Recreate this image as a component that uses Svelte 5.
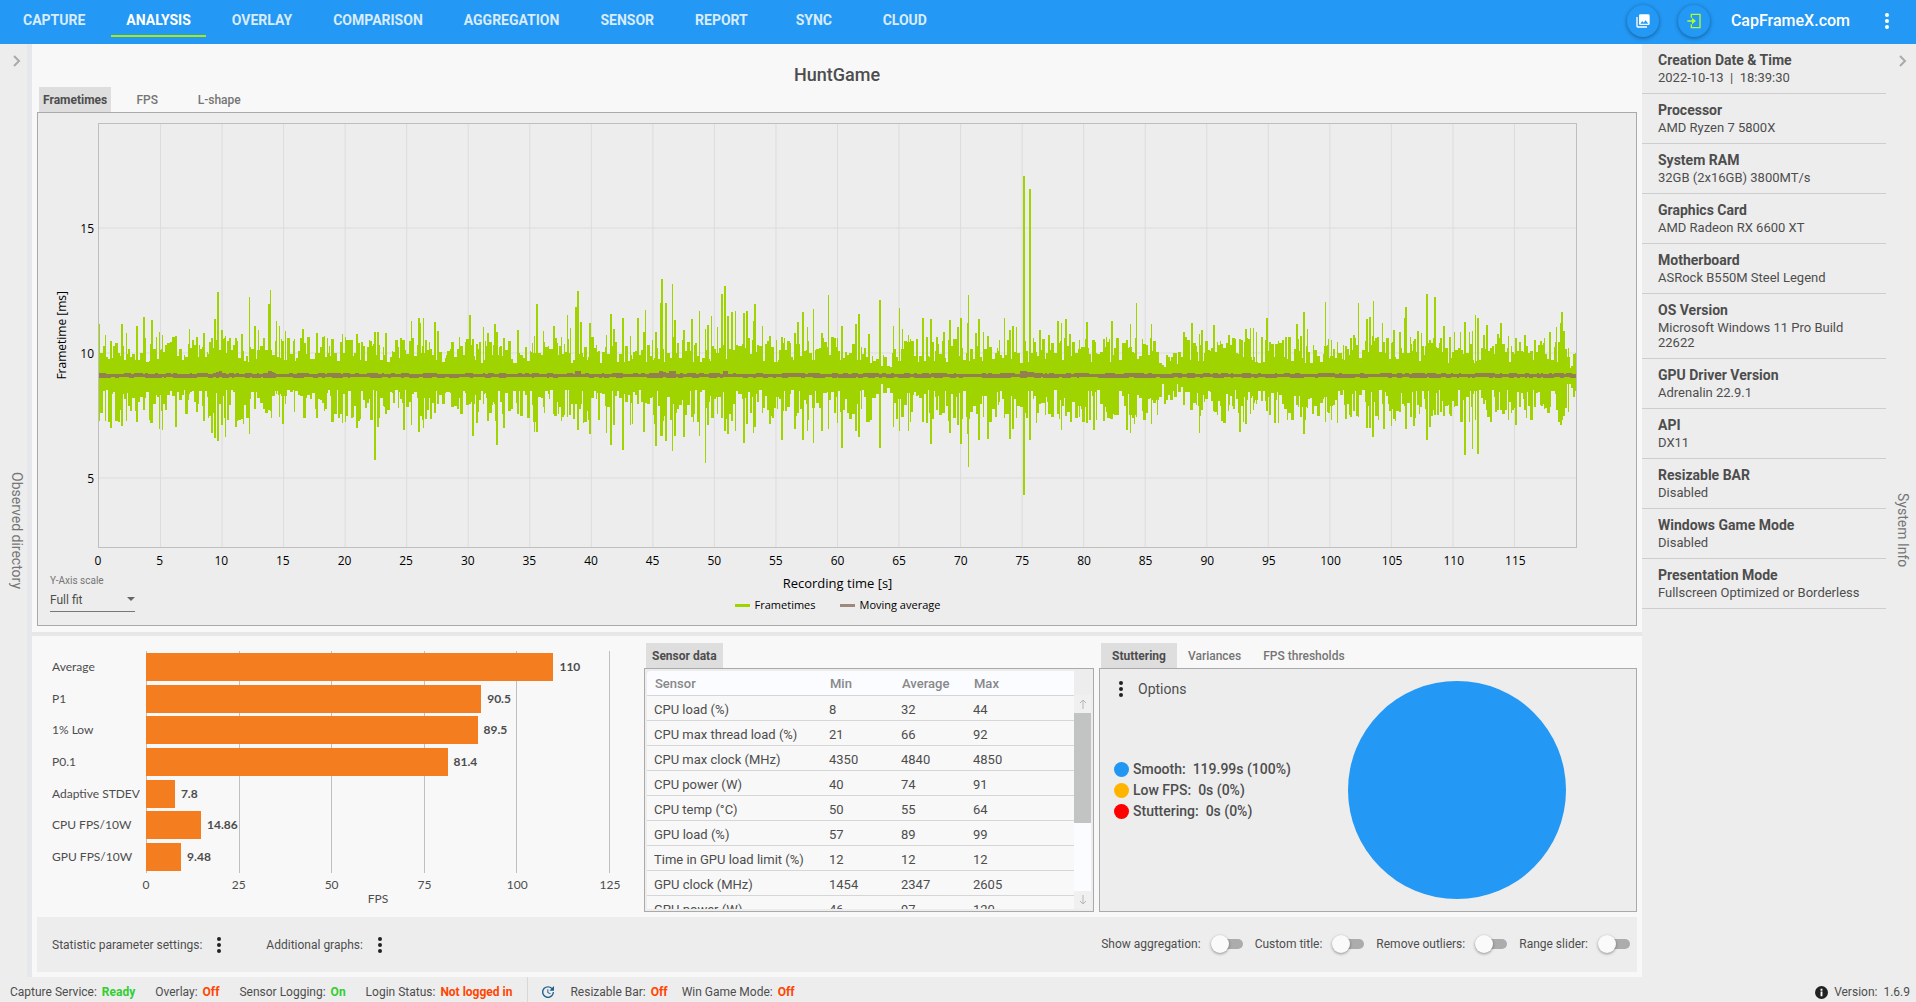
<script lang="ts">
  const nav = ["CAPTURE", "ANALYSIS", "OVERLAY", "COMPARISON", "AGGREGATION", "SENSOR", "REPORT", "SYNC", "CLOUD"];
  let page = $state("ANALYSIS");

  const chartTabs = ["Frametimes", "FPS", "L-shape"];
  let chartTab = $state("Frametimes");

  const stutterTabs = ["Stuttering", "Variances", "FPS thresholds"];
  let stutterTab = $state("Stuttering");

  const info = [
    ["Creation Date & Time", "2022-10-13  |  18:39:30"],
    ["Processor", "AMD Ryzen 7 5800X"],
    ["System RAM", "32GB (2x16GB) 3800MT/s"],
    ["Graphics Card", "AMD Radeon RX 6600 XT"],
    ["Motherboard", "ASRock B550M Steel Legend"],
    ["OS Version", "Microsoft Windows 11 Pro Build 22622"],
    ["GPU Driver Version", "Adrenalin 22.9.1"],
    ["API", "DX11"],
    ["Resizable BAR", "Disabled"],
    ["Windows Game Mode", "Disabled"],
    ["Presentation Mode", "Fullscreen Optimized or Borderless"],
  ];

  const stats = [
    { name: "Average", value: 110 },
    { name: "P1", value: 90.5 },
    { name: "1% Low", value: 89.5 },
    { name: "P0.1", value: 81.4 },
    { name: "Adaptive STDEV", value: 7.8 },
    { name: "CPU FPS/10W", value: 14.86 },
    { name: "GPU FPS/10W", value: 9.48 },
  ];
  const fpsMax = 125;
  const fpsTicks = [0, 25, 50, 75, 100, 125];

  const sensors = [
    ["CPU load (%)", 8, 32, 44],
    ["CPU max thread load (%)", 21, 66, 92],
    ["CPU max clock (MHz)", 4350, 4840, 4850],
    ["CPU power (W)", 40, 74, 91],
    ["CPU temp (°C)", 50, 55, 64],
    ["GPU load (%)", 57, 89, 99],
    ["Time in GPU load limit (%)", 12, 12, 12],
    ["GPU clock (MHz)", 1454, 2347, 2605],
    ["GPU power (W)", 46, 97, 120],
  ];

  const stutter = [
    { name: "Smooth", text: "119.99s (100%)", color: "#2196f3" },
    { name: "Low FPS", text: "0s (0%)", color: "#ffb400" },
    { name: "Stuttering", text: "0s (0%)", color: "#ff0000" },
  ];

  const toggles = $state([
    { name: "Show aggregation", on: false },
    { name: "Custom title", on: false },
    { name: "Remove outliers", on: false },
    { name: "Range slider", on: false },
  ]);

  // frametime plot, 120 s wide, drawn in a 1478 x 423 box
  const W = 1478;
  const H = 423;
  const xTicks = Array.from({ length: 24 }, (_, i) => i * 5);
  const yTicks = [15, 10, 5];
  const yOf = (ms: number) => 104 + (15 - ms) * 25;

  // [x, top, bottom] of the frames that stand out
  const peaks = [
    [0, 200, 289], [6, 211, 297], [11, 217, 304], [22, 200, 302], [27, 209, 297], [37, 202, 298], [44, 193, 286], [52, 196, 298],
    [60, 208, 305], [63, 211, 306], [76, 212, 303], [90, 205, 270], [97, 213, 288], [104, 209, 297], [112, 214, 309], [115, 195, 314],
    [118, 168, 317], [122, 206, 301], [126, 212, 313], [136, 214, 303], [142, 210, 295], [150, 173, 310], [155, 202, 285], [159, 206, 270],
    [169, 180, 286], [171, 166, 287], [177, 197, 270], [180, 202, 293], [186, 207, 280], [203, 205, 270], [217, 209, 294], [225, 212, 287],
    [243, 210, 299], [246, 213, 298], [257, 210, 304], [271, 217, 283], [275, 208, 336], [278, 208, 303], [286, 209, 290], [304, 216, 306],
    [312, 197, 301], [319, 194, 308], [321, 199, 280], [324, 194, 304], [335, 198, 289], [338, 207, 280], [370, 191, 280], [373, 215, 312],
    [384, 203, 280], [388, 209, 297], [395, 200, 280], [397, 208, 321], [404, 214, 304], [418, 206, 290], [435, 212, 308], [437, 180, 308],
    [444, 207, 283], [454, 202, 290], [462, 213, 297], [468, 191, 293], [471, 204, 280], [476, 183, 280], [478, 167, 306], [481, 198, 280],
    [490, 199, 310], [507, 211, 309], [511, 190, 321], [514, 205, 301], [523, 194, 326], [531, 212, 301], [538, 194, 280], [544, 208, 308],
    [546, 186, 270], [556, 208, 322], [561, 179, 312], [562, 155, 312], [566, 179, 317], [573, 160, 327], [575, 196, 312], [584, 206, 313],
    [592, 195, 293], [600, 187, 312], [606, 205, 339], [608, 201, 301], [612, 192, 294], [618, 203, 290], [622, 170, 294], [625, 162, 307],
    [628, 192, 310], [632, 188, 297], [636, 187, 307], [644, 189, 319], [647, 187, 300], [654, 197, 309], [655, 180, 303], [663, 202, 289],
    [670, 212, 300], [682, 213, 316], [695, 209, 305], [698, 198, 289], [703, 188, 316], [708, 203, 307], [714, 185, 319], [722, 209, 307],
    [729, 171, 305], [738, 214, 299], [743, 202, 324], [757, 200, 307], [760, 190, 313], [770, 210, 298], [781, 176, 324], [795, 202, 303],
    [801, 184, 307], [804, 205, 280], [810, 211, 307], [824, 194, 298], [832, 195, 320], [838, 213, 286], [845, 208, 288], [851, 196, 309],
    [859, 203, 301], [862, 194, 320], [869, 199, 310], [870, 171, 343], [877, 209, 270], [880, 195, 316], [885, 208, 293], [889, 212, 315],
    [906, 194, 294], [911, 206, 315], [914, 202, 305], [918, 203, 294], [925, 52, 371], [931, 65, 316], [941, 206, 280], [950, 211, 285],
    [959, 197, 290], [963, 199, 306], [967, 195, 292], [971, 210, 280], [981, 216, 293], [988, 198, 299], [995, 224, 306], [1008, 213, 288],
    [1011, 215, 288], [1013, 197, 280], [1028, 216, 306], [1032, 200, 309], [1038, 179, 293], [1044, 215, 284], [1048, 221, 289],
    [1053, 200, 300], [1059, 228, 291], [1085, 208, 281], [1093, 199, 283], [1098, 222, 281], [1101, 210, 309], [1103, 206, 286],
    [1115, 201, 287], [1119, 218, 291], [1122, 217, 282], [1130, 211, 281], [1135, 216, 285], [1141, 215, 308], [1147, 205, 300],
    [1152, 204, 290], [1155, 204, 286], [1158, 208, 280], [1163, 219, 277], [1168, 194, 287], [1171, 218, 291], [1177, 220, 276],
    [1184, 216, 280], [1187, 213, 279], [1198, 200, 281], [1202, 212, 293], [1205, 188, 310], [1206, 202, 306], [1209, 205, 284],
    [1215, 221, 289], [1227, 178, 298], [1230, 215, 280], [1233, 216, 296], [1239, 218, 299], [1247, 222, 295], [1252, 214, 282],
    [1255, 211, 287], [1260, 179, 293], [1268, 195, 304], [1271, 193, 304], [1274, 212, 313], [1275, 177, 304], [1277, 214, 292],
    [1279, 213, 285], [1284, 199, 280], [1285, 218, 305], [1290, 215, 280], [1293, 219, 302], [1295, 206, 295], [1301, 208, 288],
    [1306, 194, 282], [1307, 183, 305], [1312, 220, 293], [1315, 217, 302], [1319, 207, 281], [1323, 209, 275], [1328, 170, 316],
    [1331, 216, 303], [1336, 173, 283], [1345, 202, 292], [1351, 213, 290], [1356, 208, 283], [1362, 208, 276], [1366, 198, 331],
    [1371, 208, 298], [1374, 207, 325], [1377, 191, 296], [1379, 194, 330], [1385, 211, 280], [1388, 201, 286], [1397, 220, 288],
    [1399, 210, 286], [1402, 199, 279], [1410, 212, 296], [1413, 222, 289], [1417, 214, 301], [1421, 218, 283], [1426, 211, 286],
    [1428, 227, 294], [1436, 216, 283], [1442, 217, 281], [1446, 214, 285], [1451, 208, 283], [1458, 203, 281], [1462, 199, 301],
    [1463, 188, 296], [1465, 207, 292], [1470, 224, 288], [1475, 230, 273],
  ];

  // small generator with a fixed seed, so the trace is the same on every render
  let seed = 1337;
  const rnd = () => {
    seed = (seed * 1103515245 + 12345) % 2147483648;
    return seed / 2147483648;
  };

  function buildTrace() {
    const top: number[] = [];
    const bottom: number[] = [];
    for (let x = 0; x < W; ) {
      const w = 1 + Math.floor(rnd() * 3);
      const calm = (x > 772 && x < 796) || (x > 1059 && x < 1084) || x > 1466 ? 0.6 : 1;
      const t = 251 - Math.round((12 + rnd() * 26) * calm);
      const b = 251 + Math.round((15 + rnd() ** 1.5 * 34) * calm);
      for (let i = 0; i < w && x < W; i++, x++) {
        top[x] = t;
        bottom[x] = b;
      }
    }
    for (const [x, t, b] of peaks) {
      const w = t < 70 || x % 3 ? 2 : 1;
      for (let i = x; i < x + w && i < W; i++) {
        top[i] = Math.min(top[i], t);
        bottom[i] = Math.max(bottom[i], b);
      }
    }
    return top.map((t, x) => `M${x} ${t}h1V${bottom[x]}h-1z`).join("");
  }

  function buildAverage() {
    let d = "";
    for (let x = 0; x < W; ) {
      const w = 2 + Math.floor(rnd() * 4);
      const y = 249 + Math.floor(rnd() * 2);
      const spike = peaks.some(([px, t]) => t < 170 && Math.abs(px - x) < 4) ? 2 : 0;
      d += `M${x} ${y - spike}h${w}V${253 + Math.floor(rnd() * 2)}h-${w}z`;
      x += w;
    }
    return d;
  }

  const trace = buildTrace();
  const average = buildAverage();
</script>

{#snippet dots()}
  <svg class="dots" viewBox="0 0 4 16" aria-hidden="true">
    <circle cx="2" cy="2" r="2" /><circle cx="2" cy="8" r="2" /><circle cx="2" cy="14" r="2" />
  </svg>
{/snippet}

{#snippet chevron()}
  <svg class="chevron" viewBox="0 0 8 12" aria-hidden="true"><path d="M1 1l5 5-5 5" /></svg>
{/snippet}

<div class="app">
  <header>
    <nav>
      {#each nav as item (item)}
        <button class="nav-item" class:active={page === item} onclick={() => (page = item)}>{item}</button>
      {/each}
    </nav>
    <div class="head-right">
      <button class="round" aria-label="Screenshot">
        <svg viewBox="0 0 24 24"><path fill="#fff" d="M22 16V4a2 2 0 0 0-2-2H8a2 2 0 0 0-2 2v12a2 2 0 0 0 2 2h12a2 2 0 0 0 2-2m-11-4l2.030 2.710L16 11l4 5H8M2 6v14a2 2 0 0 0 2 2h14v-2H4V6" /></svg>
      </button>
      <button class="round" aria-label="Login">
        <svg viewBox="0 0 24 24" fill="none" stroke="#adff2f" stroke-width="2">
          <path d="M8 7V2h13v20H8v-5M2 12h10" />
          <path fill="#adff2f" stroke="none" d="M9 7l6 5-6 5z" />
        </svg>
      </button>
      <a class="brand" href="#home">CapFrameX.com</a>
      <button class="more" aria-label="More">{@render dots()}</button>
    </div>
  </header>

  <div class="body">
    <aside class="strip left">
      <button aria-label="Expand directory">{@render chevron()}</button>
      <span>Observed directory</span>
    </aside>

    <main>
      <section class="top">
        <h1>HuntGame</h1>
        <div class="tabs wide">
          {#each chartTabs as tab (tab)}
            <button class="tab" class:active={chartTab === tab} onclick={() => (chartTab = tab)}>{tab}</button>
          {/each}
        </div>
        <div class="panel chart">
          <div class="plot-row">
            <div class="y-title"><span>Frametime [ms]</span></div>
            <div class="y-ticks">
              {#each yTicks as t (t)}<span>{t}</span>{/each}
            </div>
            <svg class="plot" viewBox="0 0 {W} {H}" preserveAspectRatio="none" shape-rendering="crispEdges">
              <g stroke="#dcdcdc">
                {#each xTicks.slice(1) as t (t)}
                  <line x1={(t / 120) * W} x2={(t / 120) * W} y1="0" y2={H} />
                {/each}
                {#each yTicks as t (t)}
                  <line x1="0" x2={W} y1={yOf(t)} y2={yOf(t)} />
                {/each}
              </g>
              <path d={trace} fill="#9fd400" />
              <path d={average} fill="#92814d" />
            </svg>
          </div>
          <div class="x-axis">
            <div class="x-ticks">
              {#each xTicks as t (t)}<span>{t}</span>{/each}
            </div>
          </div>
          <div class="under">
            <div class="scale">
              <label for="yscale">Y-Axis scale</label>
              <div class="select">
                <select id="yscale">
                  <option>Full fit</option>
                  <option>IQR</option>
                </select>
                <i></i>
              </div>
            </div>
            <div class="captions">
              <div class="x-title">Recording time [s]</div>
              <div class="legend">
                <span><i class="green"></i>Frametimes</span>
                <span><i class="brown"></i>Moving average</span>
              </div>
            </div>
          </div>
        </div>
      </section>

      <div class="splitter"></div>

      <section class="bottom">
        <div class="bars">
          <div class="bar-names">
            {#each stats as s (s.name)}<span>{s.name}</span>{/each}
          </div>
          <div class="bar-area">
            <div class="bar-plot">
              {#each stats as s (s.name)}
                <div class="bar-row">
                  <div class="bar" style="width:{(s.value / fpsMax) * 100}%"></div>
                  <b>{s.value}</b>
                </div>
              {/each}
            </div>
            <div class="bar-ticks">
              {#each fpsTicks as t (t)}<span>{t}</span>{/each}
            </div>
            <div class="bar-unit">FPS</div>
          </div>
        </div>

        <div class="sensor">
          <div class="tabs snug"><button class="tab active">Sensor data</button></div>
          <div class="panel sheet">
            <div class="table-wrap">
              <table>
                <thead>
                  <tr><th>Sensor</th><th>Min</th><th>Average</th><th>Max</th></tr>
                </thead>
                <tbody>
                  {#each sensors as row (row[0])}
                    <tr>{#each row as cell}<td>{cell}</td>{/each}</tr>
                  {/each}
                </tbody>
              </table>
            </div>
            <div class="scrollbar">
              <svg viewBox="0 0 8 10"><path d="M4 10V1M1 4l3-3 3 3" /></svg>
              <div class="track"><div class="thumb"></div></div>
              <svg viewBox="0 0 8 10"><path d="M4 0v9M1 6l3 3 3-3" /></svg>
            </div>
          </div>
        </div>

        <div class="stutter">
          <div class="tabs">
            {#each stutterTabs as tab (tab)}
              <button class="tab" class:active={stutterTab === tab} onclick={() => (stutterTab = tab)}>{tab}</button>
            {/each}
          </div>
          <div class="panel pie-panel">
            <div class="pie-left">
              <button class="options">{@render dots()}Options</button>
              <ul>
                {#each stutter as s (s.name)}
                  <li><i style="background:{s.color}"></i>{s.name + ":  " + s.text}</li>
                {/each}
              </ul>
            </div>
            <div class="pie"></div>
          </div>
        </div>
      </section>

      <footer>
        <button class="setting">Statistic parameter settings: {@render dots()}</button>
        <button class="setting">Additional graphs: {@render dots()}</button>
        <div class="toggles">
          {#each toggles as t (t.name)}
            <label>{t.name}: <input type="checkbox" role="switch" bind:checked={t.on} /></label>
          {/each}
        </div>
      </footer>
    </main>

    <aside class="info">
      <dl>
        {#each info as [k, v] (k)}
          <div><dt>{k}</dt><dd>{v}</dd></div>
        {/each}
      </dl>
      <div class="strip right">
        <button aria-label="Collapse info">{@render chevron()}</button>
        <span>System Info</span>
      </div>
    </aside>
  </div>

  <div class="status">
    <div class="group">
      <span>Capture Service: <b class="ok">Ready</b></span>
      <span>Overlay: <b class="bad">Off</b></span>
      <span>Sensor Logging: <b class="ok">On</b></span>
      <span>Login Status: <b class="bad">Not logged in</b></span>
    </div>
    <div class="group second">
      <svg class="sync" viewBox="0 0 24 24" aria-hidden="true">
        <path fill="#1f618d" d="M21 10.120h-6.780l2.740-2.820c-2.730-2.700-7.150-2.800-9.880-.1a6.875 6.875 0 0 0 0 9.790 7.020 7.020 0 0 0 9.880 0C18.320 15.650 19 14.080 19 12.100h2c0 1.980-.88 4.550-2.640 6.290-3.510 3.480-9.210 3.480-12.720 0-3.500-3.470-3.530-9.110-.02-12.580a8.987 8.987 0 0 1 12.650 0L21 3v7.120M12.500 8v4.250l3.500 2.080-.72 1.210L11 13V8h1.500z" />
      </svg>
      <span>Resizable Bar: <b class="bad">Off</b></span>
      <span>Win Game Mode: <b class="bad">Off</b></span>
    </div>
    <div class="version">
      <svg viewBox="0 0 14 14" aria-hidden="true"><circle cx="7" cy="7" r="7" fill="#222" /><path d="M6 6h2v5H6zM6 3h2v2H6z" fill="#fff" /></svg>
      <span>Version:</span><span>1.6.9</span>
    </div>
  </div>
</div>

<style>
  :global(body) {
    background: #ededed;
    color: #4d4d4d;
    font: 13px/16px Roboto, "Liberation Sans", sans-serif;
  }
  button {
    padding: 0;
    border: none;
    background: none;
    color: inherit;
    font: inherit;
    cursor: pointer;
  }
  .app {
    display: flex;
    flex-direction: column;
    min-height: 100vh;
  }
  .dots {
    width: 4px;
    height: 16px;
    fill: #222;
    flex: none;
  }
  .chevron {
    width: 8px;
    height: 12px;
    fill: none;
    stroke: #aaa;
    stroke-width: 2;
  }

  header {
    display: flex;
    justify-content: space-between;
    height: 44px;
    background: #2398f4;
    color: #fff;
  }
  nav {
    display: flex;
    gap: 11px;
    padding-left: 8px;
  }
  .nav-item {
    min-width: 80px;
    height: 37px;
    padding: 5px 15px 0;
    border-bottom: 2px solid transparent;
    color: #d8ecfd;
    font-size: 14px;
    font-weight: 700;
  }
  .nav-item.active {
    border-color: #aeea00;
    color: #fff;
  }
  .head-right {
    display: flex;
    align-items: center;
    height: 42px;
    padding-right: 27px;
  }
  .round {
    display: grid;
    place-items: center;
    width: 32px;
    height: 32px;
    margin-right: 19px;
    border-radius: 50%;
    box-shadow: 0 1px 4px rgba(0, 0, 0, 0.4);
  }
  .round svg {
    width: 16px;
    height: 16px;
  }
  .brand {
    margin-left: 2px;
    color: #fff;
    font-size: 16px;
    font-weight: 500;
    text-decoration: none;
  }
  .more {
    display: flex;
    margin-left: 35px;
  }
  .more .dots {
    fill: #fff;
  }

  .body {
    display: flex;
    flex: 1;
  }
  .strip {
    display: flex;
    flex-direction: column;
    align-items: center;
    flex: none;
    box-sizing: border-box;
    color: #757575;
    font-size: 14px;
  }
  .strip button {
    height: 40px;
    padding-bottom: 4px;
  }
  .strip span {
    flex: 1;
    writing-mode: vertical-rl;
    text-align: center;
  }
  .left {
    width: 32px;
    padding-left: 2px;
    box-shadow: inset -5px 0 #e6e7ea;
  }
  .right {
    width: 30px;
    padding-left: 4px;
  }

  main {
    flex: 1;
    min-width: 0;
    background: #f8f8f8;
    display: flex;
    flex-direction: column;
  }
  h1 {
    margin: 0;
    padding: 21px 0 2px;
    font-size: 18px;
    line-height: 20px;
    font-weight: 500;
    text-align: center;
  }
  .top {
    padding: 0 5px 6px;
  }
  .tabs {
    display: flex;
    height: 25px;
    padding-left: 2px;
  }
  .tab {
    padding: 0 11px;
    color: #757575;
    font-size: 12px;
    font-weight: 500;
  }
  .tab.active {
    background: #dedede;
    color: #4d4d4d;
    font-weight: 700;
  }
  .wide .tab {
    min-width: 72px;
    padding: 0 4px;
  }
  .snug .tab {
    padding: 0 6px;
  }
  .panel {
    box-sizing: border-box;
    border: 1px solid #aaa;
    background: #ededed;
  }

  .chart {
    padding: 10px 59px 12px 12px;
    color: #000;
    font-family: "Open Sans", "Noto Sans", sans-serif;
    font-size: 12px;
  }
  .plot-row {
    display: flex;
  }
  .y-title {
    width: 24px;
    display: flex;
    justify-content: center;
    align-items: center;
  }
  .y-title span {
    writing-mode: vertical-rl;
    transform: rotate(180deg);
  }
  .y-ticks {
    width: 20px;
    padding: 43px 4px 0 0;
    text-align: right;
    line-height: 125px;
    display: flex;
    flex-direction: column;
    height: 382px;
  }
  .plot {
    flex: 1;
    min-width: 0;
    height: 423px;
    border: 1px solid #bfbfbf;
  }
  .x-axis {
    padding-left: 48px;
  }
  .x-ticks {
    display: grid;
    grid-template-columns: repeat(24, 1fr);
    margin: 5px calc(100% / 48) 0 calc(-100% / 48);
    text-align: center;
  }
  .under {
    display: flex;
    margin-top: 5px;
  }
  .scale {
    width: 48px;
    font-family: Roboto, sans-serif;
    color: #4d4d4d;
    font-size: 12px;
  }
  .scale label {
    display: block;
    color: #757575;
    font-size: 10px;
    line-height: 14px;
    white-space: nowrap;
  }
  .select {
    position: relative;
    width: 85px;
  }
  select {
    display: block;
    appearance: none;
    width: 85px;
    height: 24px;
    padding: 0;
    border: none;
    border-bottom: 1px solid #777;
    border-radius: 0;
    background: none;
    color: inherit;
    font: inherit;
  }
  .select i {
    position: absolute;
    top: 9px;
    right: 0;
    border: 4px solid transparent;
    border-top-color: #666;
    border-bottom: none;
    pointer-events: none;
  }
  .captions {
    flex: 1;
    text-align: center;
    padding-top: 1px;
  }
  .x-title {
    font-size: 13px;
  }
  .legend {
    display: flex;
    justify-content: center;
    gap: 24px;
    margin-top: 6px;
    font-size: 11px;
    line-height: 16px;
  }
  .legend span {
    display: flex;
    align-items: center;
    gap: 5px;
  }
  .legend i {
    width: 15px;
    height: 3px;
  }
  .green {
    background: #9fd400;
  }
  .brown {
    background: #a1887f;
  }

  .splitter {
    height: 4px;
    background: #e7e7e7;
  }

  .bottom {
    display: flex;
    gap: 5px;
    padding: 7px 5px 5px;
  }
  .bars {
    display: flex;
    flex: 1;
    min-width: 0;
    padding: 8px 29px 0 15px;
    font-family: Lato, sans-serif;
    font-size: 12px;
  }
  .bar-names {
    width: 94px;
    white-space: nowrap;
  }
  .bar-names,
  .bar-plot {
    display: flex;
    flex-direction: column;
    height: 222px;
  }
  .bar-names span,
  .bar-row {
    display: flex;
    align-items: center;
    flex: 1;
  }
  .bar-area {
    flex: 1;
  }
  .bar-plot {
    background: repeating-linear-gradient(to right, #bfbfbf 0 1px, transparent 1px 20%);
    border-right: 1px solid #bfbfbf;
  }
  .bar-row {
    gap: 6px;
  }
  .bar {
    flex: none;
    height: 28px;
    background: #f47d20;
  }
  .bar-ticks {
    display: grid;
    grid-template-columns: repeat(6, 1fr);
    width: 120%;
    margin: 4px 0 0 -10%;
    text-align: center;
  }
  .bar-unit {
    line-height: 12px;
    text-align: center;
  }

  .sensor {
    width: 450px;
    flex: none;
  }
  .sheet {
    display: flex;
    height: 244px;
    padding: 2px;
  }
  .table-wrap {
    flex: 1;
    overflow: hidden;
    background: #f8f8f8;
    border-radius: 4px 0 0 0;
  }
  table {
    width: 100%;
    border-collapse: collapse;
    table-layout: fixed;
  }
  th,
  td {
    height: 20px;
    padding: 4px 0 0 7px;
    border-bottom: 1px solid #d6d6d6;
    text-align: left;
    white-space: nowrap;
  }
  th {
    height: 23px;
    padding: 1px 0 0 8px;
    background: #fafcff;
    color: #888;
    font-weight: 500;
  }
  th:first-child {
    width: 167px;
  }
  th:nth-child(2),
  th:nth-child(3) {
    width: 64px;
  }
  .scrollbar {
    width: 17px;
    margin-top: 24px;
    display: flex;
    flex-direction: column;
    align-items: center;
    background: #f0f0f0;
  }
  .scrollbar svg {
    width: 8px;
    height: 10px;
    margin: 4px;
    fill: none;
    stroke: #b5b5b5;
  }
  .track {
    width: 17px;
    flex: 1;
    background: #fafcff;
  }
  .thumb {
    height: 110px;
    background: #c2c3c3;
  }

  .stutter {
    width: 538px;
    flex: none;
  }
  .pie-panel {
    display: grid;
    grid-template-columns: 1fr 2fr;
    height: 244px;
  }
  .pie-left {
    padding: 12px 0 0 14px;
    min-width: 0;
    white-space: pre;
    font-size: 14px;
  }
  .options {
    display: flex;
    gap: 15px;
    padding-left: 5px;
  }
  ul {
    margin: 46px 0 0;
    padding: 0;
    list-style: none;
    font-weight: 500;
    line-height: 21px;
  }
  li {
    display: flex;
    align-items: center;
    gap: 4px;
  }
  li i {
    width: 15px;
    height: 15px;
    border-radius: 50%;
    flex: none;
  }
  .pie {
    width: 218px;
    height: 218px;
    border-radius: 50%;
    background: #2398f4;
    place-self: center;
  }

  footer {
    display: flex;
    align-items: center;
    height: 55px;
    margin: 0 5px 5px;
    padding: 0 7px 0 15px;
    background: #ededed;
    font-size: 12px;
  }
  .setting {
    display: flex;
    align-items: center;
    gap: 15px;
    margin-right: 45px;
  }
  .toggles {
    display: flex;
    gap: 12px;
    margin-left: auto;
    padding-bottom: 2px;
  }
  .toggles label {
    display: flex;
    align-items: center;
    gap: 10px;
  }
  .toggles input {
    appearance: none;
    position: relative;
    width: 32px;
    height: 18px;
    margin: 0;
  }
  .toggles input::before,
  .toggles input::after {
    content: "";
    position: absolute;
    inset: 0 auto 0 0;
    width: 18px;
    border-radius: 50%;
    background: #fafafa;
    box-shadow: 0 1px 3px rgba(0, 0, 0, 0.4);
  }
  .toggles input::before {
    inset: 4px 0 4px 4px;
    width: auto;
    border-radius: 5px;
    background: #acacac;
    box-shadow: none;
  }
  .toggles input:checked::after {
    inset: 0 0 0 auto;
    background: #2398f4;
  }

  .info {
    display: flex;
    width: 274px;
    flex: none;
  }
  dl {
    flex: 1;
    margin: 0;
  }
  dl div {
    padding: 7px 16px 8px;
    border-bottom: 1px solid #cdcdcd;
  }
  dt {
    margin-bottom: 1px;
    font-size: 14px;
    line-height: 18px;
    font-weight: 700;
  }
  dd {
    margin: 0;
    line-height: 15px;
    white-space: pre-wrap;
  }

  .status {
    display: flex;
    height: 25px;
    padding: 0 6px 0 10px;
    font-size: 12px;
    line-height: 30px;
    white-space: pre;
    overflow: hidden;
  }
  .group {
    display: flex;
    gap: 20px;
    padding-right: 15px;
  }
  .second {
    gap: 14px;
    padding-left: 12px;
    border-left: 1px solid #d8d8d8;
  }
  .status b {
    margin-left: 2px;
    font-weight: 700;
  }
  .ok {
    color: #32cd32;
  }
  .bad {
    color: #ff4500;
  }
  .sync {
    width: 16px;
    height: 16px;
    margin-top: 7px;
  }
  .version {
    display: flex;
    gap: 6px;
    margin-left: auto;
  }
  .version svg {
    width: 13px;
    height: 13px;
    margin-top: 9px;
  }
</style>
